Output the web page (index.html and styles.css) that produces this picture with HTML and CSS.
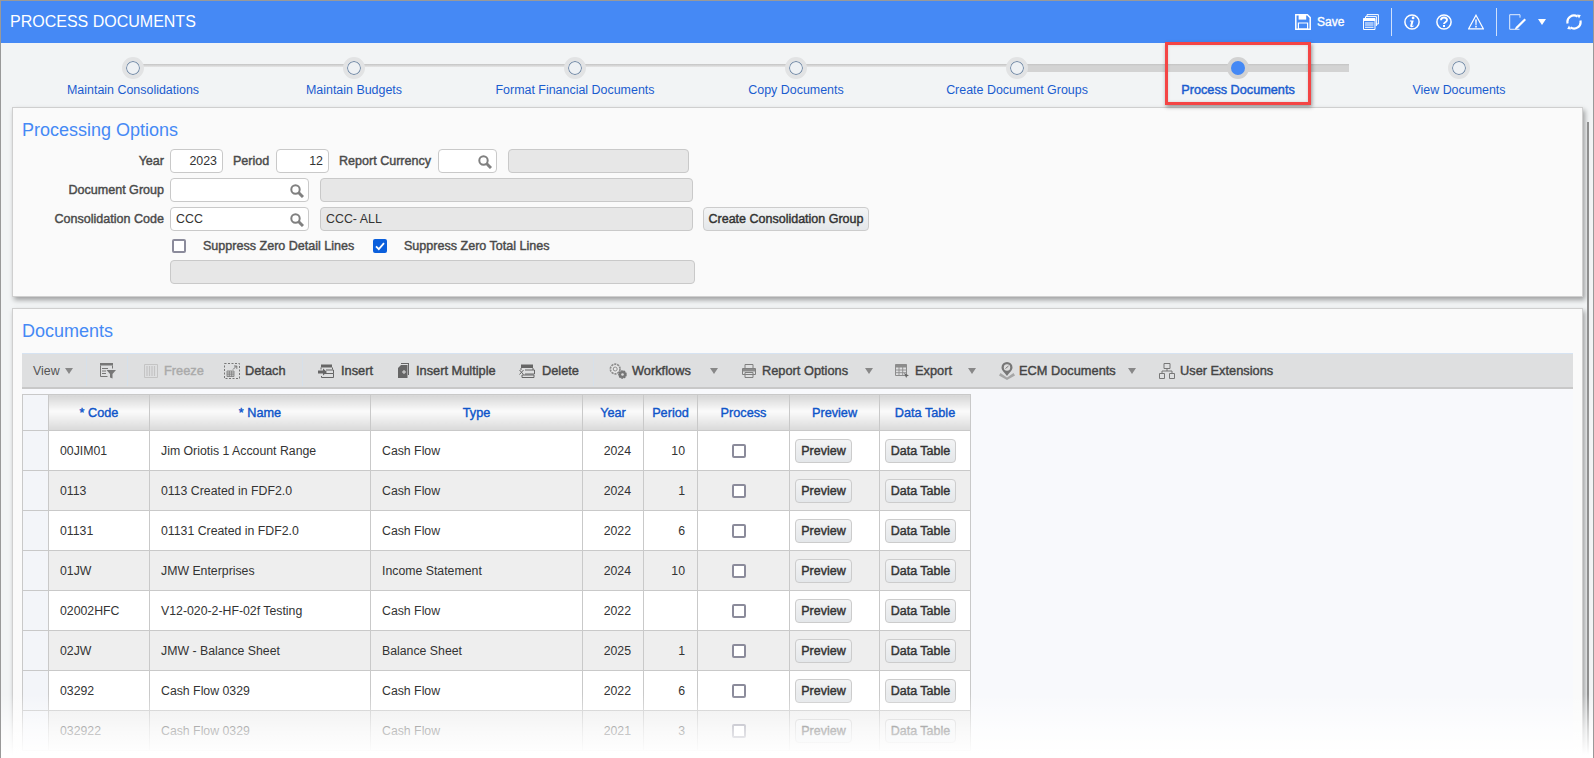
FILE: index.html
```html
<!DOCTYPE html>
<html lang="en">
<head>
<meta charset="utf-8">
<title>Process Documents</title>
<link rel="stylesheet" href="styles.css">
</head>
<body>
<div class="app">
  <header class="topbar">
    <h1 class="topbar-title">PROCESS DOCUMENTS</h1>
    <div class="topbar-tools">
      <svg class="ti ti-save" viewBox="0 0 16 16"><path d="M.8.8h11.600l2.800 2.800v11.600H.8z" fill="none" stroke="#fff" stroke-width="1.500"/><path d="M3.600 1h7.600v4.600H3.600z" fill="#fff"/><path d="M3.400 9h9.200v6H3.400z" fill="none" stroke="#fff" stroke-width="1.200"/></svg>
      <span class="ti-save-label">Save</span>
      <svg class="ti ti-print" viewBox="0 0 16 16"><path d="M4 3V.6h11.400V10H13" fill="none" stroke="#fff"/><path d="M2.500 5V2.600H13.400V12" fill="none" stroke="#fff"/><path d="M.5 4.500h11.500v11H.5z" fill="none" stroke="#fff"/><path d="M.5 4.500h11.500v2.500H.5zM2 8.500h8.500v1H2zM2 10.600h8.500v1H2zM2 12.700h8.500v1H2z" fill="#fff"/></svg>
      <span class="ti-sep ti-sep-a"></span>
      <svg class="ti ti-info" viewBox="0 0 16 16"><circle cx="8" cy="8" r="7.100" fill="none" stroke="#fff" stroke-width="1.500"/><circle cx="9.100" cy="3.900" r="1.400" fill="#fff"/><path d="M6 6.500h3.700l-1.500 5.200c-.1.500.4.500 1.300-.1l.3.600c-1.400 1.200-4 1.500-3.600-.4l1.100-4.300H5.800z" fill="#fff"/></svg>
      <svg class="ti ti-help" viewBox="0 0 16 16"><circle cx="8" cy="8" r="7.100" fill="none" stroke="#fff" stroke-width="1.500"/><path d="M5 6.200c0-3.600 6-3.500 6-.1 0 2.200-3 2.100-3 4" fill="none" stroke="#fff" stroke-width="1.900"/><path d="M7 11.100h2v2H7z" fill="#fff"/></svg>
      <svg class="ti ti-warn" viewBox="0 0 16 16"><path d="M8 1.200 15.300 14.800H.7z" fill="none" stroke="#fff" stroke-width="1.200"/><path d="M7.200 5.500h1.600l-.3 5.500h-1zM7.200 11.800h1.600v1.600H7.200z" fill="#fff"/></svg>
      <span class="ti-sep ti-sep-b"></span>
      <svg class="ti ti-edit" viewBox="0 0 18 16"><path d="M11 3.700V.7H.7v14.600h9.800" fill="none" stroke="#e3edfd" stroke-width="1"/><path d="M15.500 4.500 6.800 13 5.800 15.500l2.700-1 8.500-8.500z" fill="#fff"/></svg>
      <span class="ti-caret"></span>
      <svg class="ti ti-refresh" viewBox="0 0 16 16"><path d="M1.600 9.400A6.500 6.500 0 0 1 11.600 2.600" fill="none" stroke="#fff" stroke-width="2.200"/><path d="M14.400 6.600A6.500 6.500 0 0 1 4.400 13.400" fill="none" stroke="#fff" stroke-width="2.200"/><path d="M11 .4 14.800 1 13 4.600zM5 15.600 1.200 15 3 11.400z" fill="#fff"/></svg>
    </div>
  </header>

  <nav class="stepper">
    <div class="step"><span class="dot"></span><span class="step-label">Maintain Consolidations</span></div>
    <div class="step"><span class="dot"></span><span class="step-label">Maintain Budgets</span></div>
    <div class="step"><span class="dot"></span><span class="step-label">Format Financial Documents</span></div>
    <div class="step"><span class="dot"></span><span class="step-label">Copy Documents</span></div>
    <div class="step step-done"><span class="dot"></span><span class="step-label">Create Document Groups</span></div>
    <div class="step step-active"><span class="dot"></span><span class="step-label">Process Documents</span><span class="callout"></span></div>
    <div class="step step-last"><span class="dot"></span><span class="step-label">View Documents</span></div>
  </nav>

  <section class="panel panel-options">
    <h2 class="panel-title">Processing Options</h2>
    <div class="form-row">
      <label class="lbl lbl-main">Year</label>
      <span class="fld fld-num">2023</span>
      <label class="lbl lbl-period">Period</label>
      <span class="fld fld-num">12</span>
      <label class="lbl lbl-currency">Report Currency</label>
      <span class="fld fld-currency"><svg class="lens" viewBox="0 0 14 14"><circle cx="5.500" cy="5.500" r="4.200" fill="none" stroke="#808080" stroke-width="2"/><path d="m8.500 8.500 4.500 4.500" stroke="#808080" stroke-width="3"/></svg></span>
      <span class="fld fld-ro fld-currency-desc"></span>
    </div>
    <div class="form-row">
      <label class="lbl lbl-main">Document Group</label>
      <span class="fld fld-lookup"><svg class="lens" viewBox="0 0 14 14"><circle cx="5.500" cy="5.500" r="4.200" fill="none" stroke="#808080" stroke-width="2"/><path d="m8.500 8.500 4.500 4.500" stroke="#808080" stroke-width="3"/></svg></span>
      <span class="fld fld-ro fld-desc"></span>
    </div>
    <div class="form-row">
      <label class="lbl lbl-main">Consolidation Code</label>
      <span class="fld fld-lookup">CCC<svg class="lens" viewBox="0 0 14 14"><circle cx="5.500" cy="5.500" r="4.200" fill="none" stroke="#808080" stroke-width="2"/><path d="m8.500 8.500 4.500 4.500" stroke="#808080" stroke-width="3"/></svg></span>
      <span class="fld fld-ro fld-desc">CCC- ALL</span>
      <button class="btn btn-create" type="button">Create Consolidation Group</button>
    </div>
    <div class="form-row form-row-checks">
      <span class="cb cb-first"></span>
      <label class="lbl lbl-check">Suppress Zero Detail Lines</label>
      <span class="cb cb-on"><svg viewBox="0 0 14 14"><path d="m3 7.300 2.800 2.800L11 4.200" fill="none" stroke="#fff" stroke-width="1.800"/></svg></span>
      <label class="lbl lbl-check">Suppress Zero Total Lines</label>
    </div>
    <div class="form-row">
      <span class="fld fld-ro fld-wide"></span>
    </div>
  </section>

  <section class="panel panel-docs">
    <h2 class="panel-title">Documents</h2>
    <div class="toolbar">
      <span class="tb tb-view">View</span><span class="tb-caret tb-caret-view"></span>
      <span class="tb-sep tb-sep-1"></span>
      <svg class="tbi tbi-filter" viewBox="0 0 16 16"><path d="M0 0h13v2.500H0z" fill="#777"/><path d="M.5 2.500v11h7M12.500 2.500v3M2 5.500h6M2 8h4M2 10.500h4" fill="none" stroke="#777"/><path d="M6.500 7H16l-3.500 4v4.500l-2.500-1V11z" fill="#777"/></svg>
      <span class="tb-sep tb-sep-2"></span>
      <svg class="tbi tbi-freeze" viewBox="0 0 14 14"><path d="M.5.500h13v13H.5z" fill="none" stroke="#c4c4c4"/><path d="M3 2v10M5.500 2v10M8 2v10M10.500 2v10" stroke="#c4c4c4" stroke-width="1.200"/></svg>
      <span class="tb tb-off tb-freeze">Freeze</span>
      <svg class="tbi tbi-detach" viewBox="0 0 16 16"><path d="M.5.500h15v15H.5z" fill="none" stroke="#777" stroke-dasharray="2 1.500"/><path d="M3 8h7v5.500H3zM3 10h7M3 11.800h7M5.300 8v5.500M7.700 8v5.500" fill="none" stroke="#777" stroke-width=".8"/><path d="m9 6.500 3.500-3.500M10 3h2.800v2.800" fill="none" stroke="#777"/></svg>
      <span class="tb tb-strong tb-detach">Detach</span>
      <span class="tb-sep tb-sep-3"></span>
      <svg class="tbi tbi-insert" viewBox="0 0 16 14"><path d="M3 .5h11v3H3z" fill="#666"/><path d="M3 3.500v2M14.500 3.500v2M5 9.500h10.500v4H3.500v-1.500" fill="none" stroke="#666"/><path d="M0 6.500h5V4.500l4 3.500-4 3.500V9.500H0z" fill="#666"/><path d="M8 6h7.500v3.500" fill="none" stroke="#666"/></svg>
      <span class="tb tb-strong tb-insert">Insert</span>
      <svg class="tbi tbi-multi" viewBox="0 0 11 15"><path d="M3 0h8v12h-1V1H3z" fill="#666"/><path d="M3 2h6.500v13H0V5z" fill="#666"/><path d="M4 8.500h1.500V7h1v1.500H8v1H6.500V11h-1V9.500H4z" fill="#ddd"/></svg>
      <span class="tb tb-strong tb-multi">Insert Multiple</span>
      <svg class="tbi tbi-delete" viewBox="0 0 16 14"><path d="M2 .5h12v3.500H2z" fill="#666"/><path d="M2 4v2M14 4v2M6 6h9.500v4H6M3 11h12v2.500H3z" fill="none" stroke="#666"/><path d="m.5 6 4 4.500m0-4.500-4 4.500" stroke="#666"/></svg>
      <span class="tb tb-strong tb-delete">Delete</span>
      <span class="tb-sep tb-sep-4"></span>
      <svg class="tbi tbi-wf" viewBox="0 0 18 16"><circle cx="6.200" cy="6" r="4.800" fill="#e8e8e8" stroke="#8c8c8c" stroke-width="1.700" stroke-dasharray="2.200 .8"/><circle cx="6.200" cy="6" r="2" fill="none" stroke="#8c8c8c"/><circle cx="13.500" cy="11.500" r="3.600" fill="#777" stroke="#737373" stroke-width="1.400" stroke-dasharray="1.800 .7"/><circle cx="13.500" cy="11.500" r="1.300" fill="#ddd"/></svg>
      <span class="tb tb-strong tb-wf">Workflows</span><span class="tb-caret tb-caret-wf"></span>
      <svg class="tbi tbi-print" viewBox="0 0 14 14"><path d="M3 .5h8v4H3zM.5 4.500h13v6h-13zM3 8.500h8v5H3z" fill="#dedfe0" stroke="#808080"/><path d="M1 5h12v2.500H1z" fill="#8c8c8c"/></svg>
      <span class="tb tb-strong tb-report">Report Options</span><span class="tb-caret tb-caret-report"></span>
      <svg class="tbi tbi-export" viewBox="0 0 15 14"><path d="M.5.500h11v11H.5z" fill="none" stroke="#8c8c8c"/><path d="M.5.500h11v3H.5z" fill="#8c8c8c"/><path d="M.5 6h11M.5 8.700h11M4 3v8.500M7.700 3v8.500" stroke="#8c8c8c" stroke-width=".9"/><path d="m9 9 5 2.500-2 .7-.8 1.800z" fill="#666"/></svg>
      <span class="tb tb-strong tb-export">Export</span><span class="tb-caret tb-caret-export"></span>
      <svg class="tbi tbi-ecm" viewBox="0 0 16 18"><path d="M8 0a5.500 5.500 0 0 1 5.500 5.500c0 2.800-3 5-5.500 8.500-2.500-3.500-5.500-5.700-5.500-8.500A5.500 5.500 0 0 1 8 0z" fill="#777"/><circle cx="8" cy="5.500" r="3.200" fill="#ddd"/><path d="M6.500 6.500 9.500 4" stroke="#777"/><path d="M1.500 11 0 13.500 8 18l8-4.500-1.500-2.500L8 15.500z" fill="#a6a6a6"/></svg>
      <span class="tb tb-strong tb-ecm">ECM Documents</span><span class="tb-caret tb-caret-ecm"></span>
      <svg class="tbi tbi-ext" viewBox="0 0 16 16"><path d="M5 .5h6v5H5zM.5 10.500h5v5h-5zM10.500 10.500h5v5h-5z" fill="none" stroke="#777"/><path d="M8 5.500v2.500M3 10.500V8h10v2.500" fill="none" stroke="#777"/></svg>
      <span class="tb tb-strong tb-ext">User Extensions</span>
    </div>
    <div class="grid-area">
      <table class="grid">
        <colgroup><col class="c0"><col class="c1"><col class="c2"><col class="c3"><col class="c4"><col class="c5"><col class="c6"><col class="c7"><col class="c8"></colgroup>
        <thead><tr><th></th><th>* Code</th><th>* Name</th><th>Type</th><th>Year</th><th>Period</th><th>Process</th><th>Preview</th><th>Data Table</th></tr></thead>
        <tbody>
          <tr><td class="sel"></td><td>00JIM01</td><td>Jim Oriotis 1 Account Range</td><td>Cash Flow</td><td class="num">2024</td><td class="num">10</td><td class="mid"><span class="cb cb-row"></span></td><td class="act"><button class="btn btn-prev" type="button">Preview</button></td><td class="act"><button class="btn btn-data" type="button">Data Table</button></td></tr>
          <tr><td class="sel"></td><td>0113</td><td>0113 Created in FDF2.0</td><td>Cash Flow</td><td class="num">2024</td><td class="num">1</td><td class="mid"><span class="cb cb-row"></span></td><td class="act"><button class="btn btn-prev" type="button">Preview</button></td><td class="act"><button class="btn btn-data" type="button">Data Table</button></td></tr>
          <tr><td class="sel"></td><td>01131</td><td>01131 Created in FDF2.0</td><td>Cash Flow</td><td class="num">2022</td><td class="num">6</td><td class="mid"><span class="cb cb-row"></span></td><td class="act"><button class="btn btn-prev" type="button">Preview</button></td><td class="act"><button class="btn btn-data" type="button">Data Table</button></td></tr>
          <tr><td class="sel"></td><td>01JW</td><td>JMW Enterprises</td><td>Income Statement</td><td class="num">2024</td><td class="num">10</td><td class="mid"><span class="cb cb-row"></span></td><td class="act"><button class="btn btn-prev" type="button">Preview</button></td><td class="act"><button class="btn btn-data" type="button">Data Table</button></td></tr>
          <tr><td class="sel"></td><td>02002HFC</td><td>V12-020-2-HF-02f Testing</td><td>Cash Flow</td><td class="num">2022</td><td class="num"></td><td class="mid"><span class="cb cb-row"></span></td><td class="act"><button class="btn btn-prev" type="button">Preview</button></td><td class="act"><button class="btn btn-data" type="button">Data Table</button></td></tr>
          <tr><td class="sel"></td><td>02JW</td><td>JMW - Balance Sheet</td><td>Balance Sheet</td><td class="num">2025</td><td class="num">1</td><td class="mid"><span class="cb cb-row"></span></td><td class="act"><button class="btn btn-prev" type="button">Preview</button></td><td class="act"><button class="btn btn-data" type="button">Data Table</button></td></tr>
          <tr><td class="sel"></td><td>03292</td><td>Cash Flow 0329</td><td>Cash Flow</td><td class="num">2022</td><td class="num">6</td><td class="mid"><span class="cb cb-row"></span></td><td class="act"><button class="btn btn-prev" type="button">Preview</button></td><td class="act"><button class="btn btn-data" type="button">Data Table</button></td></tr>
          <tr><td class="sel"></td><td>032922</td><td>Cash Flow 0329</td><td>Cash Flow</td><td class="num">2021</td><td class="num">3</td><td class="mid"><span class="cb cb-row"></span></td><td class="act"><button class="btn btn-prev" type="button">Preview</button></td><td class="act"><button class="btn btn-data" type="button">Data Table</button></td></tr>
        </tbody>
      </table>
    </div>
  </section>

  <div class="scroll-thumb"></div>
  <div class="fade"></div>
</div>
</body>
</html>
```

FILE: styles.css
```css
* { box-sizing: border-box; }
html, body { margin: 0; padding: 0; height: 758px; overflow: hidden; background: #fff; }
body { font-family: "Liberation Sans", Arial, sans-serif; font-size: 12px; color: #333; }

.app { position: relative; height: 758px; overflow: hidden; background: #f2f4f5; border: 1px solid #999; border-bottom: 0; }

/* top bar */
.topbar { height: 42px; background: #4589f5; display: flex; align-items: center; padding-left: 9px; }
.topbar-title { margin: 0; font-size: 16px; font-weight: 400; color: #fff; white-space: nowrap; }
.topbar-tools { margin-left: auto; display: flex; align-items: center; color: #fff; }
.ti { display: block; width: 16px; height: 16px; flex: none; }
.ti-save-label { margin-left: 6px; font-size: 12px; -webkit-text-stroke: .35px currentColor; width: 27px; white-space: nowrap; }
.ti-print { margin-left: 19px; }
.ti-sep { width: 1px; height: 28px; background: #cfe0fb; flex: none; }
.ti-sep-a { margin-left: 12px; }
.ti-info { margin-left: 12px; }
.ti-help { margin-left: 16px; }
.ti-warn { margin-left: 16px; }
.ti-sep-b { margin-left: 12px; }
.ti-edit { margin-left: 12px; width: 18px; }
.ti-caret { margin-left: 11px; width: 0; height: 0; border-left: 4.500px solid transparent; border-right: 4.500px solid transparent; border-top: 6px solid #fff; flex: none; }
.ti-refresh { margin-left: 20px; margin-right: 11px; }

/* stepper */
.stepper { height: 64px; display: flex; padding-left: 21.500px; }
.step { position: relative; width: 221px; flex: none; display: flex; flex-direction: column; align-items: center; }
.step::after { content: ""; position: absolute; left: 50%; width: 221px; top: 21px; height: 3px; background: linear-gradient(#c4c4c4, #e6e6e6); }
.step-last::after { display: none; }
.step-done::after { top: 21px; height: 8px; background: linear-gradient(#c4c4c4, #d3d3d3 25%); }
.step-active::after { top: 21px; height: 8px; width: 111px; background: linear-gradient(#c4c4c4, #d3d3d3 25%); }
.dot { position: relative; z-index: 1; margin-top: 14px; width: 22px; height: 22px; border-radius: 50%; background: #eef1f4; border: 4px solid #e2e3e4; box-shadow: inset 0 0 0 1px #7088a5; }
.step-label { margin-top: 4px; color: #1a5ccf; font-size: 12.450px; white-space: nowrap; line-height: 14px; }
.step-active .step-label { font-size: 12.700px; -webkit-text-stroke: .45px currentColor; }
.step-active .dot { background: #4589f5; box-shadow: none; border-color: #d2d2d2; }
.callout { position: absolute; left: 37.500px; top: -1px; width: 146px; height: 63px; border: 3px solid #f44545; box-shadow: 1px 2px 4px rgba(0,0,0,.4), inset 0 0 3px rgba(0,0,0,.15); z-index: 2; }

/* panels */
.panel { margin: 0 10px 0 11px; background: #fafafa; border: 1px solid #cfcfcf; box-shadow: 2px 3px 5px rgba(0,0,0,.35); padding: 0 9px; }
.panel-options { height: 190px; }
.panel-docs { margin-top: 11px; height: 460px; }
.panel-title { margin: 11px 0 8px; font-size: 18px; line-height: 22px; font-weight: 400; color: #4589f5; }
.panel-docs .panel-title { margin-bottom: 11px; }

/* form */
.form-row { display: flex; height: 24px; align-items: center; margin-bottom: 5px; }
.form-row-checks { height: 19px; }
.lbl { font-size: 12.550px; -webkit-text-stroke: .42px currentColor; color: #4a4a4a; white-space: nowrap; }
.lbl-main { width: 142px; text-align: right; margin-right: 6px; }
.lbl-period { margin-left: 10px; width: 37px; margin-right: 6px; }
.lbl-currency { margin-left: 10px; width: 93px; margin-right: 6px; }
.lbl-check { width: 170px; margin-left: 17px; }
.fld { position: relative; display: block; height: 24px; line-height: 22px; border: 1px solid #c9c9c9; border-radius: 4px; background: #fff; padding: 0 5px; font-size: 12.400px; color: #333; flex: none; }
.fld-num { width: 53px; text-align: right; }
.fld-currency { width: 59px; }
.fld-currency-desc { width: 181px; margin-left: 11px; }
.fld-lookup { width: 139px; }
.fld-desc { width: 373px; margin-left: 11px; }
.fld-wide { width: 525px; margin-left: 148px; }
.fld-ro { background: #e7e7e7; }
.lens { position: absolute; right: 4px; top: 5px; width: 14px; height: 14px; }

.cb { display: block; width: 14px; height: 14px; border: 2px solid #8b8b9b; border-radius: 2px; background: #fff; flex: none; }
.cb-first { margin-left: 150px; }
.cb-on { background: #0b5fdc; border: 0; }
.cb-on svg { display: block; width: 14px; height: 14px; }

.btn { font-family: inherit; font-size: 12.500px; -webkit-text-stroke: .42px currentColor; font-weight: 400; color: #333; height: 24px; padding: 0; border: 1px solid #ccc; border-radius: 4px; background: linear-gradient(#f3f4f5, #e4e7ea); white-space: nowrap; }
.btn-create { width: 166px; margin-left: 10px; }
.btn-prev { width: 57px; display: block; }
.btn-data { width: 71px; display: block; }

/* toolbar */
.toolbar { height: 36px; display: flex; align-items: center; background: #dedfe0; border-top: 1px solid #d6e3f2; border-bottom: 2px solid #c8c8c8; }
.tb { font-size: 12.400px; white-space: nowrap; color: #555; }
.tb-strong { font-size: 12.800px; -webkit-text-stroke: .4px currentColor; color: #444; }
.tb-off { font-size: 12.800px; -webkit-text-stroke: .4px currentColor; color: #aaa; }
.tbi { display: block; flex: none; }
.tb-sep { width: 1px; height: 30px; background: #d6e0ea; flex: none; }
.tb-caret { width: 0; height: 0; border-left: 4.500px solid transparent; border-right: 4.500px solid transparent; border-top: 6px solid #888; flex: none; }
.tb-view { margin-left: 11px; width: 26px; }
.tb-caret-view { margin-left: 6px; }
.tb-sep-1 { margin-left: 13px; }
.tbi-filter { width: 16px; height: 16px; margin-left: 13px; }
.tb-sep-2 { margin-left: 11px; }
.tbi-freeze { width: 14px; height: 14px; margin-left: 16px; }
.tb-freeze { margin-left: 6px; width: 38px; }
.tbi-detach { width: 16px; height: 16px; margin-left: 22px; }
.tb-detach { margin-left: 5px; width: 41px; }
.tb-sep-3 { margin-left: 16px; }
.tbi-insert { width: 16px; height: 14px; margin-left: 15px; }
.tb-insert { margin-left: 7px; width: 33px; }
.tbi-multi { width: 11px; height: 15px; margin-left: 24px; }
.tb-multi { margin-left: 7px; width: 81px; }
.tbi-delete { width: 16px; height: 14px; margin-left: 22px; }
.tb-delete { margin-left: 7px; width: 36px; }
.tb-sep-4 { margin-left: 15px; }
.tbi-wf { width: 18px; height: 16px; margin-left: 15px; }
.tb-wf { margin-left: 5px; width: 62px; }
.tb-caret-wf { margin-left: 16px; }
.tbi-print { width: 14px; height: 14px; margin-left: 24px; }
.tb-report { margin-left: 6px; width: 84px; }
.tb-caret-report { margin-left: 19px; }
.tbi-export { width: 15px; height: 14px; margin-left: 22px; }
.tb-export { margin-left: 5px; width: 37px; }
.tb-caret-export { margin-left: 16px; }
.tbi-ecm { width: 16px; height: 18px; margin-left: 23px; }
.tb-ecm { margin-left: 4px; width: 93px; }
.tb-caret-ecm { margin-left: 16px; }
.tbi-ext { width: 16px; height: 16px; margin-left: 23px; }
.tb-ext { margin-left: 5px; }

/* grid */
.grid-area { background: #f8f9fc; padding-top: 5px; height: 400px; }
.grid { border-collapse: collapse; table-layout: fixed; width: 948px; background: #fff; }
.c0 { width: 26px; } .c1 { width: 101px; } .c2 { width: 221px; } .c3 { width: 212px; } .c4 { width: 61px; } .c5 { width: 54px; } .c6 { width: 92px; } .c7 { width: 90px; } .c8 { width: 91px; }
.grid th, .grid td { border: 1px solid #c9c9c9; }
.grid th { height: 36px; padding: 0; font-size: 12.700px; font-weight: 400; -webkit-text-stroke: .4px currentColor; color: #0f55c9; text-align: center; background: linear-gradient(#d6d6d6, #fbfbfb 45%, #f2f2f2 60%, #d9d9d9); }
.grid th:first-child { background: #f3f5f9; }
.grid td { height: 40px; padding: 0 11px; font-size: 12.300px; color: #333; white-space: nowrap; overflow: hidden; }
.grid td.sel { background: #f3f5f9; padding: 0; }
.grid tbody tr:nth-child(even) td:not(.sel) { background: #eee; }
.grid td.num { text-align: right; padding-right: 12px; }
.grid td.mid { padding: 0 0 0 34px; }
.grid td.act { padding: 0 0 0 5px; }

/* overlays */
.scroll-thumb { position: absolute; left: 1586px; top: 121px; width: 2px; height: 640px; background: #8f8f8f; }
.fade { position: absolute; left: 0; right: 0; bottom: 0; height: 64px; background: linear-gradient(rgba(255,255,255,0), rgba(255,255,255,.66) 55%, #fff 95%); pointer-events: none; }
```
